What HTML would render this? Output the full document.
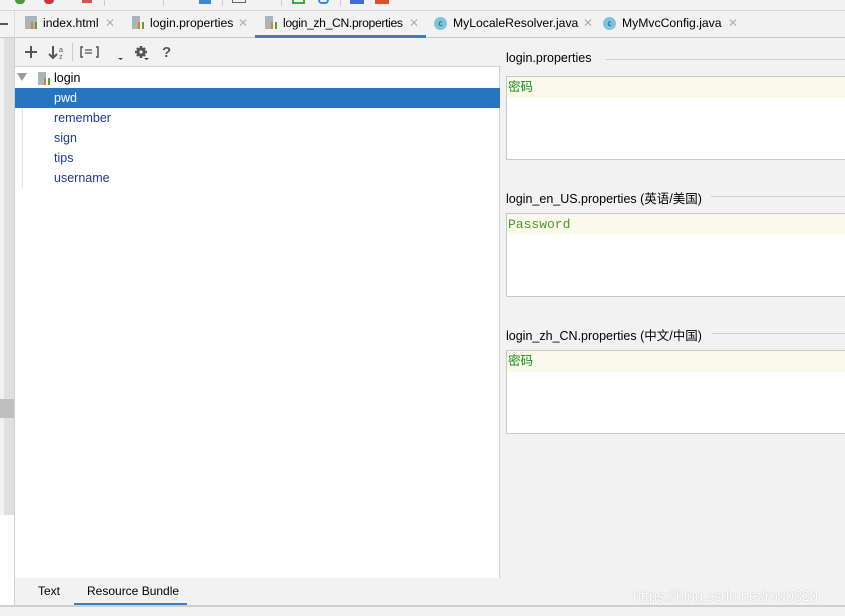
<!DOCTYPE html>
<html><head><meta charset="utf-8"><style>
*{margin:0;padding:0;box-sizing:border-box}
body{width:845px;height:616px;overflow:hidden;background:#f2f2f2;font-family:"Liberation Sans","Noto Sans CJK SC",sans-serif;font-size:12.5px;color:#000;position:relative}
.a{position:absolute}
.tab{position:absolute;top:11px;height:26px;line-height:25px;font-size:12.2px;white-space:nowrap}
.x{position:absolute;color:#b0b0b0;font-size:12px;top:11px;line-height:25px}
.ci{position:absolute;top:17px;width:13px;height:13px;border-radius:50%;background:#7cc4e0;color:#245;font-size:8px;line-height:13px;text-align:center}
.pi{display:inline-block;width:12px;height:13px;vertical-align:-2px;margin-right:6px;position:relative;background:linear-gradient(#aab4bc,#aab4bc) 0 0/8px 13px no-repeat}
.pi:after{content:"";position:absolute;right:0;bottom:0;width:6px;height:7px;background:linear-gradient(90deg,#e8801a 0 2px,transparent 2px 4px,#5aa02c 4px) }
.tree{font-size:12.5px;color:#1f3a93}
.sec{position:absolute;left:506px;right:0;font-size:12.5px}
.ln{position:absolute;height:1px;background:#d0d0d0;right:0}
.box{position:absolute;left:506px;right:-2px;background:#fff;border:1px solid #c8c8c8}
.box div{height:21px;background:#fbf9ec;line-height:21px;padding-left:1px;color:#1a8a1a}
</style></head><body>
<div class="a" style="left:0;top:0;width:845px;height:11px;background:#f2f2f2;border-bottom:1px solid #d6d6d6"></div>
<div class="a" style="left:15px;top:0;width:10px;height:4px;background:#4a9a3a;border-radius:0 0 5px 5px"></div>
<div class="a" style="left:44px;top:0;width:10px;height:4px;background:#c83a3a;border-radius:0 0 5px 5px"></div>
<div class="a" style="left:82px;top:0;width:10px;height:3px;background:#e05050"></div>
<div class="a" style="left:104px;top:0;width:1px;height:6px;background:#ccc"></div>
<div class="a" style="left:163px;top:0;width:1px;height:6px;background:#ccc"></div>
<div class="a" style="left:199px;top:0;width:12px;height:4px;background:#3b86d6"></div>
<div class="a" style="left:222px;top:0;width:1px;height:6px;background:#ccc"></div>
<div class="a" style="left:232px;top:0;width:14px;height:3px;border:1px solid #666;border-top:0"></div>
<div class="a" style="left:281px;top:0;width:1px;height:6px;background:#ccc"></div>
<div class="a" style="left:292px;top:0;width:13px;height:4px;border:2px solid #3aa83a;border-top:0"></div>
<div class="a" style="left:318px;top:0;width:11px;height:4px;border:2px solid #2b8de0;border-top:0;border-radius:0 0 6px 6px"></div>
<div class="a" style="left:340px;top:0;width:1px;height:6px;background:#ccc"></div>
<div class="a" style="left:350px;top:0;width:14px;height:4px;background:#3b6fd6"></div>
<div class="a" style="left:375px;top:0;width:14px;height:4px;background:#e0502a"></div>

<div class="a" style="left:0;top:11px;width:845px;height:27px;background:#f2f2f2;border-bottom:1px solid #c9c9c9"></div>
<div class="a" style="left:0;top:23px;width:8px;height:2px;background:#555"></div>
<div class="a" style="left:14px;top:11px;width:1px;height:27px;background:#ddd"></div>
<div class="tab" style="left:25px"><span class="pi" style="background:#aab4bc"></span>index.html</div><span class="x" style="left:105px">✕</span>
<div class="tab" style="left:132px"><span class="pi"></span>login.properties</div><span class="x" style="left:238px">✕</span>
<div class="tab" style="left:265px;letter-spacing:-0.35px"><span class="pi"></span>login_zh_CN.properties</div><span class="x" style="left:409px">✕</span>
<div class="a" style="left:255px;top:35px;width:171px;height:3px;background:#3c7fc1"></div>
<span class="ci" style="left:434px">c</span><div class="tab" style="left:453px">MyLocaleResolver.java</div><span class="x" style="left:583px">✕</span>
<span class="ci" style="left:603px">c</span><div class="tab" style="left:622px">MyMvcConfig.java</div><span class="x" style="left:728px">✕</span>

<div class="a" style="left:4px;top:38px;width:10px;height:477px;background:#e0e0e0"></div>
<div class="a" style="left:0;top:399px;width:14px;height:19px;background:#c0c0c0"></div>
<div class="a" style="left:0;top:540px;width:14px;height:19px;background:#fbfae0"></div>
<div class="a" style="left:0;top:515px;width:14px;height:92px;background:#fff"></div>
<div class="a" style="left:14px;top:38px;width:1px;height:568px;background:#cfcfcf"></div>

<div class="a" style="left:15px;top:38px;width:486px;height:29px;background:#f2f2f2;border-bottom:1px solid #d4d4d4"></div>
<svg class="a" style="left:15px;top:38px" width="160" height="29">
<g stroke="#555" stroke-width="2" fill="none">
<path d="M10 14h12M16 8v12"/>
<path d="M38 8v12M34 16l4 4 4-4"/>
<path d="M68 9h-2v10h2M81 9h2v10h-2" stroke-width="1.5"/>
<path d="M70 12h7M70 15h7" stroke-width="1.2"/>
</g>
<text x="44" y="14" font-size="7" fill="#555" font-family="Liberation Sans">a</text>
<text x="44" y="21" font-size="7" fill="#555" font-family="Liberation Sans">z</text>
<rect x="57" y="5" width="1" height="18" fill="#ccc"/>
<path d="M103 20h5l-2.5 2z" fill="#333"/>
<circle cx="126" cy="14" r="4.5" fill="#555"/>
<g stroke="#555" stroke-width="2.5"><path d="M126 8v12M120 14h12M122 10l8 8M130 10l-8 8"/></g>
<circle cx="126" cy="14" r="1.6" fill="#f2f2f2"/>
<path d="M129 20h5l-2.5 2z" fill="#333"/>
<text x="147" y="19" font-size="15" font-weight="bold" fill="#555" font-family="Liberation Sans">?</text>
</svg>

<div class="a" style="left:15px;top:67px;width:485px;height:511px;background:#fff;border-right:1px solid #cfcfcf"></div>
<div class="a" style="left:22px;top:88px;width:1px;height:100px;background:#e0e0e0"></div>
<div class="a" style="left:17px;top:73px;width:0;height:0;border-left:5px solid transparent;border-right:5px solid transparent;border-top:8px solid #999"></div>
<div class="a" style="left:38px;top:72px"><span class="pi"></span></div>
<div class="a" style="left:54px;top:70px;line-height:17px">login</div>
<div class="a" style="left:15px;top:88px;width:485px;height:20px;background:#2675bf"></div>
<div class="a tree" style="left:54px;top:89px;line-height:18px;color:#fff">pwd</div>
<div class="a tree" style="left:54px;top:109px;line-height:18px">remember</div>
<div class="a tree" style="left:54px;top:129px;line-height:18px">sign</div>
<div class="a tree" style="left:54px;top:149px;line-height:18px">tips</div>
<div class="a tree" style="left:54px;top:169px;line-height:18px">username</div>

<div class="sec" style="top:51px">login.properties</div><div class="ln" style="left:606px;top:59px"></div>
<div class="box" style="top:76px;height:84px"><div>密码</div></div>
<div class="sec" style="top:188px">login_en_US.properties (英语/美国)</div><div class="ln" style="left:711px;top:196px"></div>
<div class="box" style="top:213px;height:84px"><div style="font-family:'Liberation Mono',monospace;font-size:13px;color:#4a9a20">Password</div></div>
<div class="sec" style="top:325px">login_zh_CN.properties (中文/中国)</div><div class="ln" style="left:712px;top:333px"></div>
<div class="box" style="top:350px;height:84px"><div>密码</div></div>

<div class="a" style="left:38px;top:584px;font-size:12px">Text</div>
<div class="a" style="left:87px;top:584px;font-size:12px">Resource Bundle</div>
<div class="a" style="left:74px;top:603px;width:113px;height:3px;background:#3c7fc1"></div>
<div class="a" style="left:0;top:605px;width:845px;height:2px;background:#d0d0d0"></div>
<div class="a" style="left:633px;top:588px;font-size:15px;color:#fff;text-shadow:0 0 1px #999;letter-spacing:-0.3px">https://blog.csdn.net/rod0320</div>
</body></html>
